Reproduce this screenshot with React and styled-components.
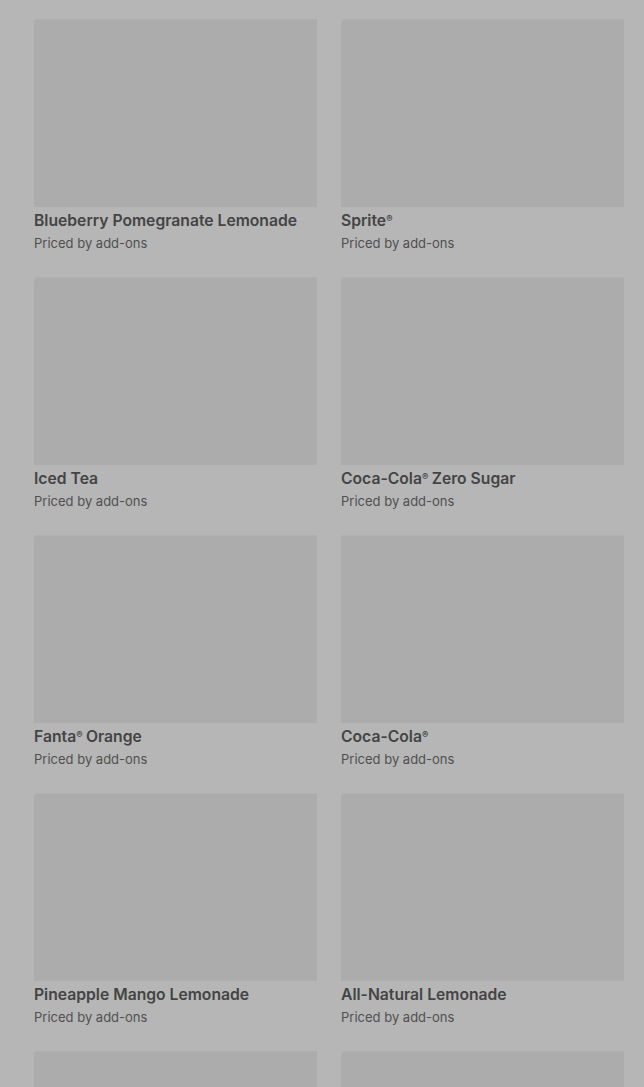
import React from 'react';
import styled, { createGlobalStyle } from 'styled-components';

const GlobalStyle = createGlobalStyle`
  html, body {
    margin: 0;
    padding: 0;
    background: #b6b6b6;
    font-family: Inter, Roboto, 'Liberation Sans', sans-serif;
    overflow: hidden;
  }
`;

const Grid = styled.main`
  display: grid;
  grid-template-columns: 283px 283px;
  column-gap: 24px;
  row-gap: 24px;
  padding: 19px 20px 0 34px;
`;

const Card = styled.div`
  display: flex;
  flex-direction: column;
`;

const Picture = styled.div`
  height: 188px;
  background: #acacac;
  border-radius: 4px 0 0 0;
  box-shadow: inset 0 1px 0 #b0b0b0;
`;

const Name = styled.h3`
  margin: 4px 0 0;
  font-size: 15.7px;
  line-height: 20px;
  font-weight: 600;
  color: #444444;
  white-space: nowrap;
`;

const Price = styled.p`
  margin: 2px 0 0;
  font-size: 13px;
  line-height: 20px;
  color: #505050;
`;

const Reg = styled.sup`
  font-size: 9.5px;
  font-weight: 700;
  line-height: 0;
  vertical-align: 4px;
  letter-spacing: -0.5px;
`;

const items = [
  ['Blueberry Pomegranate Lemonade'],
  ['Sprite', true],
  ['Iced Tea'],
  ['Coca-Cola', true, ' Zero Sugar'],
  ['Fanta', true, ' Orange'],
  ['Coca-Cola', true],
  ['Pineapple Mango Lemonade'],
  ['All-Natural Lemonade'],
  [''],
  [''],
];

function App() {
  return (
    <>
      <GlobalStyle />
      <Grid>
        {items.map(([name, reg, rest], i) => (
          <Card key={i}>
            <Picture />
            {name && (
              <>
                <Name>
                  {name}
                  {reg && <Reg>®</Reg>}
                  {rest}
                </Name>
                <Price>Priced by add-ons</Price>
              </>
            )}
          </Card>
        ))}
      </Grid>
    </>
  );
}

export default App;
